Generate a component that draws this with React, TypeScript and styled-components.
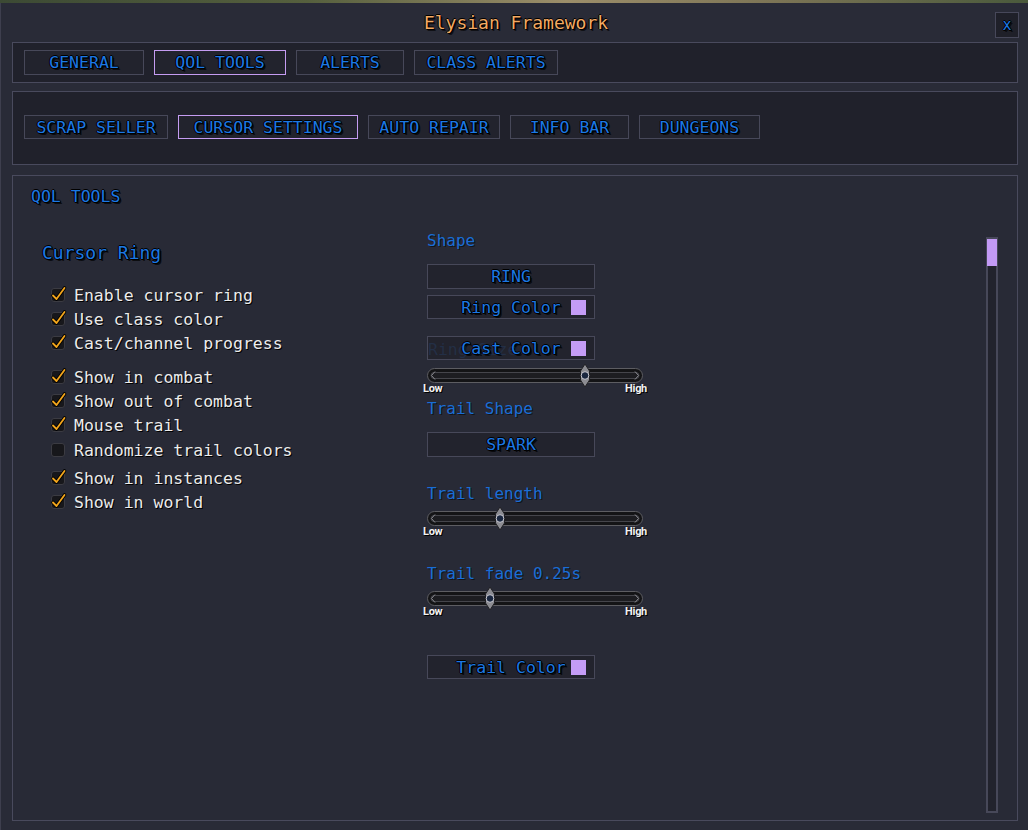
import React from 'react';
import styled, { createGlobalStyle } from 'styled-components';

const GlobalStyle = createGlobalStyle`
  html, body {
    margin: 0;
    padding: 0;
    background: #1b1c22;
  }
  * {
    box-sizing: border-box;
  }
`;

const MONO = `'DejaVu Sans Mono', 'Liberation Mono', monospace`;
const BLUE = '#1c78e4';
const OUTLINE =
  '1px 1px 0 #000, 2px 2px 0 rgba(0,0,0,0.7), -1px 0 0 #000, 0 -1px 0 #000, 1px 0 0 #000, 0 1px 0 #000';

const mainTabs = [
  { label: 'GENERAL', width: 120 },
  { label: 'QOL TOOLS', width: 132, active: true },
  { label: 'ALERTS', width: 108 },
  { label: 'CLASS ALERTS', width: 144 }
];

const subTabs = [
  { label: 'SCRAP SELLER', width: 144 },
  { label: 'CURSOR SETTINGS', width: 180, active: true },
  { label: 'AUTO REPAIR', width: 132 },
  { label: 'INFO BAR', width: 119 },
  { label: 'DUNGEONS', width: 121 }
];

const options = [
  { label: 'Enable cursor ring', checked: true, gap: 0 },
  { label: 'Use class color', checked: true, gap: 0 },
  { label: 'Cast/channel progress', checked: true, gap: 0 },
  { label: 'Show in combat', checked: true, gap: 10 },
  { label: 'Show out of combat', checked: true, gap: 0 },
  { label: 'Mouse trail', checked: true, gap: 0 },
  { label: 'Randomize trail colors', checked: false, gap: 1 },
  { label: 'Show in instances', checked: true, gap: 4 },
  { label: 'Show in world', checked: true, gap: 0 }
];

const CheckBox: React.FC<{ checked: boolean }> = ({ checked }) => (
  <svg width="16" height="16" viewBox="0 0 16 16" style={{ overflow: 'visible' }}>
    <rect x="1.5" y="1.5" width="13" height="13" rx="2.5" fill="#17171b" stroke="#3b3b42" />
    {checked && (
      <>
        <path d="M3 8.5 L6.5 12 L14.5 1" fill="none" stroke="#000" strokeWidth="3.6" strokeLinecap="round" strokeLinejoin="round" />
        <path d="M3 8.5 L6.5 12 L14.5 1" fill="none" stroke="#f2a51c" strokeWidth="1.8" strokeLinecap="round" strokeLinejoin="round" />
      </>
    )}
  </svg>
);

const Slider: React.FC<{ value: number }> = ({ value }) => {
  const x = 8 + value * 200;
  return (
    <svg width="216" height="15" viewBox="0 0 216 15" style={{ overflow: 'visible', display: 'block' }}>
      <rect x="0.5" y="0.5" width="215" height="14" rx="7" fill="#141416" stroke="#5d5d62" />
      <rect x="4" y="4.5" width="208" height="6" rx="3" fill="#1d1d21" stroke="#45454b" />
      <path d="M8 3.5 L4.5 7.5 L8 11.5" fill="none" stroke="#8a8a90" strokeWidth="1" />
      <path d="M208 3.5 L211.5 7.5 L208 11.5" fill="none" stroke="#8a8a90" strokeWidth="1" />
      <polygon
        points={`${x},-4 ${x + 4.5},3 ${x + 4.5},12 ${x},19 ${x - 4.5},12 ${x - 4.5},3`}
        fill="#8c8c92"
        stroke="#202024"
      />
      <circle cx={x} cy="7.5" r="3.8" fill="#1a2740" stroke="#c8c8d0" strokeWidth="1" />
    </svg>
  );
};

const SliderBlock: React.FC<{ value: number }> = ({ value }) => (
  <SliderWrap>
    <Slider value={value} />
    <SliderLabels>
      <span>Low</span>
      <span>High</span>
    </SliderLabels>
  </SliderWrap>
);

const ColorButton: React.FC<{ label: string; gap?: number; ghost?: string }> = ({
  label,
  gap = 0,
  ghost
}) => (
  <WideButton $gap={gap} $height={24}>
    {ghost && <Ghost>{ghost}</Ghost>}
    <span />
    <ButtonText>{label}</ButtonText>
    <Swatch />
  </WideButton>
);

export default function App() {
  return (
    <Page>
      <GlobalStyle />
      <Backdrop />
      <Window>
        <TitleRow>
          <Title>Elysian Framework</Title>
          <CloseButton>x</CloseButton>
        </TitleRow>

        <TabPanel>
          {mainTabs.map((t) => (
            <TabButton key={t.label} $active={t.active} $width={t.width} $height={25}>
              {t.label}
            </TabButton>
          ))}
        </TabPanel>

        <SubPanel>
          {subTabs.map((t) => (
            <TabButton key={t.label} $active={t.active} $width={t.width} $height={24}>
              {t.label}
            </TabButton>
          ))}
        </SubPanel>

        <ContentPanel>
          <SectionTitle>QOL TOOLS</SectionTitle>
          <Body>
            <LeftColumn>
              <GroupTitle>Cursor Ring</GroupTitle>
              <OptionList>
                {options.map((o) => (
                  <OptionRow key={o.label} $gap={o.gap}>
                    <CheckBox checked={o.checked} />
                    <OptionLabel>{o.label}</OptionLabel>
                  </OptionRow>
                ))}
              </OptionList>
            </LeftColumn>

            <RightColumn>
              <FieldLabel $gap={0}>Shape</FieldLabel>
              <WideButton $gap={12} $height={25}>
                <span />
                <ButtonText>RING</ButtonText>
                <span />
              </WideButton>
              <ColorButton label="Ring Color" gap={6} />
              <ColorButton label="Cast Color" gap={17} ghost="Ring Size" />
              <SliderSpacer $gap={8}>
                <SliderBlock value={0.75} />
              </SliderSpacer>
              <FieldLabel $gap={3}>Trail Shape</FieldLabel>
              <WideButton $gap={12} $height={25}>
                <span />
                <ButtonText>SPARK</ButtonText>
                <span />
              </WideButton>
              <FieldLabel $gap={26}>Trail length</FieldLabel>
              <SliderSpacer $gap={6}>
                <SliderBlock value={0.325} />
              </SliderSpacer>
              <FieldLabel $gap={25}>Trail fade 0.25s</FieldLabel>
              <SliderSpacer $gap={6}>
                <SliderBlock value={0.275} />
              </SliderSpacer>
              <ColorButton label="Trail Color" gap={37} />
            </RightColumn>

            <ScrollTrack>
              <ScrollThumb />
            </ScrollTrack>
          </Body>
        </ContentPanel>
      </Window>
    </Page>
  );
}

const Page = styled.div`
  width: 1028px;
  height: 830px;
  display: flex;
  flex-direction: column;
  overflow: hidden;
  font-family: ${MONO};
`;

const Backdrop = styled.div`
  height: 3px;
  flex: 0 0 3px;
  background: linear-gradient(90deg, #3c4a34 0%, #56603e 30%, #9c8e6a 55%, #7d7556 75%, #4a5a3c 100%);
`;

const Window = styled.div`
  flex: 1;
  display: flex;
  flex-direction: column;
  background: #292b37;
  border-left: 1px solid #3e3f4e;
  padding: 0 10px 9px 11px;
`;

const TitleRow = styled.div`
  height: 39px;
  display: flex;
  align-items: center;
  justify-content: center;
  position: relative;
`;

const Title = styled.div`
  font-size: 18px;
  color: #f3aa62;
  text-shadow: 1px 1px 0 #000, 2px 2px 0 rgba(0, 0, 0, 0.6), -1px 0 0 #000, 0 -1px 0 #000;
  padding-left: 2px;
`;

const CloseButton = styled.div`
  position: absolute;
  right: -1px;
  top: 9px;
  width: 24px;
  height: 26px;
  background: #1f2029;
  border: 1px solid #47485a;
  color: ${BLUE};
  font-size: 15px;
  display: flex;
  align-items: center;
  justify-content: center;
  text-shadow: ${OUTLINE};
`;

const TabPanel = styled.div`
  height: 41px;
  display: flex;
  align-items: flex-start;
  gap: 10px;
  padding: 7px 11px 0;
  background: #20212b;
  border: 1px solid #494a5d;
`;

const SubPanel = styled.div`
  margin-top: 8px;
  height: 74px;
  display: flex;
  align-items: center;
  gap: 10px;
  padding: 0 11px 2px;
  background: #20212b;
  border: 1px solid #494a5d;
`;

const TabButton = styled.div<{ $active?: boolean; $width: number; $height: number }>`
  width: ${(p) => p.$width}px;
  height: ${(p) => p.$height}px;
  display: flex;
  align-items: center;
  justify-content: center;
  background: #22232d;
  border: 1px solid ${(p) => (p.$active ? '#c59cf2' : '#474859')};
  color: ${BLUE};
  font-size: 16.5px;
  text-shadow: ${OUTLINE};
  white-space: nowrap;
`;

const ContentPanel = styled.div`
  margin-top: 10px;
  flex: 1;
  display: flex;
  flex-direction: column;
  background: #282a36;
  border: 1px solid #494a5d;
  padding: 11px 19px 7px 18px;
`;

const SectionTitle = styled.div`
  height: 20px;
  line-height: 20px;
  font-size: 16.5px;
  color: ${BLUE};
  text-shadow: ${OUTLINE};
`;

const Body = styled.div`
  flex: 1;
  margin-top: 23px;
  display: grid;
  grid-template-columns: 396px 1fr 12px;
  align-items: start;
`;

const LeftColumn = styled.div`
  padding: 11px 0 0 11px;
`;

const GroupTitle = styled.div`
  height: 24px;
  line-height: 24px;
  font-size: 18px;
  color: ${BLUE};
  text-shadow: ${OUTLINE};
`;

const OptionList = styled.div`
  margin-top: 18px;
  padding-left: 8px;
  display: flex;
  flex-direction: column;
`;

const OptionRow = styled.div<{ $gap: number }>`
  height: 24px;
  margin-top: ${(p) => p.$gap}px;
  display: flex;
  align-items: center;
  gap: 8px;
`;

const OptionLabel = styled.span`
  font-size: 16.5px;
  color: #ececec;
  text-shadow: 1px 1px 0 #000;
  white-space: nowrap;
`;

const RightColumn = styled.div`
  display: flex;
  flex-direction: column;
  align-items: flex-start;
`;

const FieldLabel = styled.div<{ $gap: number }>`
  margin-top: ${(p) => p.$gap}px;
  height: 22px;
  line-height: 22px;
  font-size: 16px;
  color: #1a6ed6;
  text-shadow: 1px 1px 0 rgba(0, 0, 0, 0.55);
  white-space: nowrap;
`;

const WideButton = styled.div<{ $gap: number; $height: number }>`
  position: relative;
  margin-top: ${(p) => p.$gap}px;
  width: 168px;
  height: ${(p) => p.$height}px;
  display: grid;
  grid-template-columns: 1fr auto 1fr;
  align-items: center;
  background: #22232d;
  border: 1px solid #474859;
  padding: 0 8px;
`;

const ButtonText = styled.span`
  font-size: 16.5px;
  color: ${BLUE};
  text-shadow: ${OUTLINE};
  white-space: nowrap;
`;

const Swatch = styled.span`
  justify-self: end;
  width: 15px;
  height: 15px;
  background: #c49cf6;
`;

const Ghost = styled.span`
  position: absolute;
  left: 0;
  top: 3px;
  font-size: 16.5px;
  color: rgba(40, 90, 160, 0.22);
  white-space: nowrap;
`;

const SliderSpacer = styled.div<{ $gap: number }>`
  margin-top: ${(p) => p.$gap}px;
`;

const SliderWrap = styled.div`
  width: 216px;
  display: flex;
  flex-direction: column;
`;

const SliderLabels = styled.div`
  width: 224px;
  margin-left: -4px;
  height: 12px;
  display: flex;
  justify-content: space-between;
  font-family: 'Roboto', 'Liberation Sans', sans-serif;
  font-weight: 700;
  font-size: 11px;
  letter-spacing: -0.3px;
  line-height: 12px;
  color: #f2f2f2;
  text-shadow: 1px 1px 0 #000;
`;

const ScrollTrack = styled.div`
  align-self: stretch;
  margin-top: 7px;
  background: #22232d;
  border: 2px solid #474859;
  padding: 1px 0;
`;

const ScrollThumb = styled.div`
  height: 27px;
  background: #c39af5;
  margin: -1px -1px 0;
`;
